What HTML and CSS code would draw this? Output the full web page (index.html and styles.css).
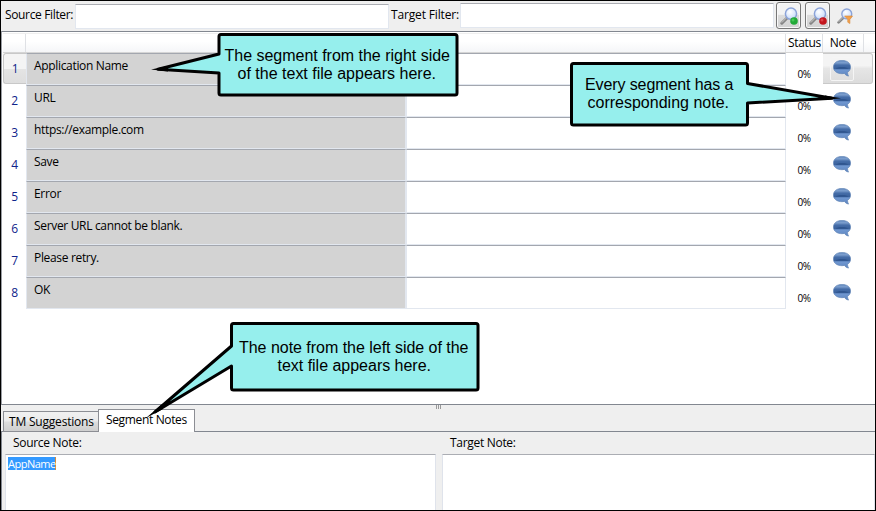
FILE: index.html
```html
<!DOCTYPE html>
<html lang="en">
<head>
<meta charset="utf-8">
<title>Translation Editor</title>
<link rel="stylesheet" href="styles.css">
</head>
<body>
<svg class="defs" aria-hidden="true">
  <defs>
    <linearGradient id="bubbleFill" x1="0" y1="0" x2="0" y2="1">
      <stop offset="0" stop-color="#5f86bd"/><stop offset=".15" stop-color="#7d9fce"/><stop offset=".3" stop-color="#456da8"/><stop offset=".53" stop-color="#3a619c"/><stop offset=".6" stop-color="#6f97d0"/><stop offset="1" stop-color="#5f86c0"/>
    </linearGradient>
    <radialGradient id="lens" cx=".4" cy=".35" r=".7">
      <stop offset="0" stop-color="#fff"/><stop offset="1" stop-color="#c3d8fa"/>
    </radialGradient>
    <symbol id="note" viewBox="0 0 18 17">
      <path d="M9 .4c5 0 8.600 2.700 8.600 6.600 0 2.500-1.300 4.300-3.100 5.300 0 1.300.4 2.500 1 3.800-2-.5-3.200-1.400-4-2.700-.8.200-1.600.300-2.500.300C4 13.700.4 11 .4 7S4 .4 9 .4z" fill="url(#bubbleFill)" stroke="#6387b8" stroke-width=".7"/>
      <path d="M3 8.800c0-2.500 12-2.500 12 0z" fill="#2f558f"/>
    </symbol>
    <symbol id="search" viewBox="0 0 18 18">
      <path d="M1.800 16.200 7.300 10.700" stroke="#858585" stroke-width="3" stroke-linecap="round"/>
      <path d="M1.800 15.600 7 10.300" stroke="#c8c8c8" stroke-width="1"/>
      <circle cx="11" cy="6.700" r="5.600" fill="url(#lens)" stroke="#8ba3d8" stroke-width="1.500"/>
    </symbol>
  </defs>
</svg>
<div class="window">
  <header class="toolbar">
    <label class="source-label">Source Filter:</label>
    <div class="input source-input"></div>
    <label class="target-label">Target Filter:</label>
    <div class="input target-input"></div>
    <button class="tool"><svg viewBox="0 0 18 18"><use href="#search"/><circle cx="14" cy="14" r="3.800" fill="#22aa38"/><circle cx="13" cy="13" r="1.500" fill="#45c957"/></svg></button>
    <button class="tool second"><svg viewBox="0 0 18 18"><use href="#search"/><circle cx="14" cy="14" r="3.800" fill="#c3151d"/><circle cx="13" cy="13" r="1.500" fill="#dd4248"/></svg></button>
    <svg class="filter" viewBox="0 0 18 18"><use href="#search"/><path d="M8.500 9h9l-3 4v4.500l-2.400-1.500v-3z" fill="#f3a04b" stroke="#d98a3c" stroke-width=".7"/></svg>
  </header>
  <main class="grid-panel">
    <div class="row head"><span></span><span></span><span></span><span>Status</span><span>Note</span><span></span></div>
    <div class="row current"><span class="num">1</span><span class="source">Application Name</span><span class="target"></span><span class="status">0%</span><span class="note"><svg><use href="#note"/></svg></span></div>
    <div class="row"><span class="num">2</span><span class="source">URL</span><span class="target"></span><span class="status">0%</span><span class="note"><svg><use href="#note"/></svg></span></div>
    <div class="row"><span class="num">3</span><span class="source">https://example.com</span><span class="target"></span><span class="status">0%</span><span class="note"><svg><use href="#note"/></svg></span></div>
    <div class="row"><span class="num">4</span><span class="source">Save</span><span class="target"></span><span class="status">0%</span><span class="note"><svg><use href="#note"/></svg></span></div>
    <div class="row"><span class="num">5</span><span class="source">Error</span><span class="target"></span><span class="status">0%</span><span class="note"><svg><use href="#note"/></svg></span></div>
    <div class="row"><span class="num">6</span><span class="source">Server URL cannot be blank.</span><span class="target"></span><span class="status">0%</span><span class="note"><svg><use href="#note"/></svg></span></div>
    <div class="row"><span class="num">7</span><span class="source">Please retry.</span><span class="target"></span><span class="status">0%</span><span class="note"><svg><use href="#note"/></svg></span></div>
    <div class="row"><span class="num">8</span><span class="source">OK</span><span class="target"></span><span class="status">0%</span><span class="note"><svg><use href="#note"/></svg></span></div>
  </main>
  <div class="tabs"><div class="tab">TM Suggestions</div><div class="tab active">Segment Notes</div><div class="grip"><i></i><i></i><i></i></div></div>
  <section class="notes">
    <div class="pane"><div class="pane-label">Source Note:</div><div class="editor"><span class="selection">AppName</span></div></div>
    <div class="pane"><div class="pane-label">Target Note:</div><div class="editor"></div></div>
  </section>
</div>
<svg class="callouts" viewBox="0 0 876 511">
  <g class="shape">
    <path d="M221 34.500H455Q457 34.500 457 36.500V93Q457 95 455 95H221Q219 95 219 93V73L158 69.200 219 54V36.500Q219 34.500 221 34.500Z"/>
    <path d="M573.500 63.500H745.500Q747.500 63.500 747.500 65.500V83.500L832 98.300 747.500 103V123Q747.500 125 745.500 125H573.500Q571.500 125 571.500 123V65.500Q571.500 63.500 573.500 63.500Z"/>
    <path d="M233.500 323.500H476Q478 323.500 478 325.500V388Q478 390 476 390H233.500Q231.500 390 231.500 388V366L155 412 231.500 346V325.500Q231.500 323.500 233.500 323.500Z"/>
  </g>
  <path d="M168 66 151 69.500 168 71.500ZM825 95.500 841 98.300 825 100ZM161 405 146 418 163 409Z"/>
  <g class="words">
    <text x="224.500" y="61" textLength="225.500">The segment from the right side</text>
    <text x="237.500" y="79" textLength="198.500">of the text file appears here.</text>
    <text x="585" y="90" textLength="148.500">Every segment has a</text>
    <text x="587.500" y="108" textLength="141.500">corresponding note.</text>
    <text x="239" y="353" textLength="229.500">The note from the left side of the</text>
    <text x="277.500" y="371" textLength="153.500">text file appears here.</text>
  </g>
</svg>
</body>
</html>
```
FILE: styles.css
```css
* { box-sizing: border-box; }
body { margin: 0; font: 12px/16px "Open Sans", "Noto Sans", sans-serif; letter-spacing: -.25px; color: #000; }
.defs { position: absolute; width: 0; height: 0; }
.window { width: 876px; height: 511px; border: 1px solid #000; background: #efefef; display: flex; flex-direction: column; overflow: hidden; }
.toolbar { height: 30px; flex: none; display: flex; align-items: flex-start; padding: 1px 0 0 4px; }
.toolbar label { padding-top: 5px; white-space: nowrap; flex: none; letter-spacing: -.3px; }
.source-label { width: 70px; }
.toolbar .source-label { letter-spacing: -.35px; }
.toolbar .target-label { width: 71px; padding-left: 2px; letter-spacing: -.15px; }
.input { height: 25px; background: #fff; border: 1px solid #e2e7ef; border-top-color: #abadb3; flex: none; margin-top: 1px; }
.source-input { width: 314px; margin-top: 2px; }
.target-input { width: 314px; }
.tool { width: 25px; height: 27px; padding: 3px; margin-left: 2px; border: 1px solid #777; border-radius: 3px; background: linear-gradient(#f3f3f3 45%, #dcdcdc 50%, #d2d2d2); box-shadow: inset 0 0 0 1px #f8f8f8; flex: none; }
.tool svg { width: 18px; height: 18px; display: block; }
.tool.second { margin-left: 4px; }
.filter { width: 16px; height: 16px; margin: 6px 0 0 7px; }
.grid-panel { height: 374px; flex: none; background: #fff; border-top: 1px solid #828790; border-bottom: 1px solid #828790; border-left: 1px solid #9a9da3; padding: 1px 0 0 1px; }
.row { height: 32px; display: grid; grid-template-columns: 23px 380px 380px 37px 50px; }
.row.head { height: 20px; grid-template-columns: 23px 380px 380px 37px 41px 8px; background: linear-gradient(#fff 40%, #f5f6f8); border-top: 1px solid #efefef; border-bottom: 1px solid #d5d5d5; }
.head span { border-right: 1px solid #dfe1e5; text-align: center; padding-top: 1px; letter-spacing: -.2px; }
.head span:nth-child(4) { padding-left: 1px; letter-spacing: -.3px; }
.head span:nth-child(2) { border: 0; }
.head span:last-child { border: 0; }
.num { color: #10248b; text-align: center; padding-top: 8px; }
.source, .target { border: 1px solid #e2e7ef; border-top-color: #a3a7af; }
.source { background: #d3d3d3; padding: 4px 7px; white-space: nowrap; letter-spacing: -.33px; }
.status { font-size: 10px; line-height: 14px; padding: 14px 0 0 11.5px; letter-spacing: -.4px; }
.note { padding: 7px 0 0 10px; }
.note svg { display: block; width: 18px; height: 17px; }
.current .num { background: linear-gradient(#f4f4f4 50%, #e4e4e4 52%, #dedede); border: 1px solid #c8c8c8; border-right: 0; border-radius: 3px 0 0 3px; padding-top: 7px; height: 31px; }
.current .note { background: linear-gradient(#f4f4f4 40%, #e6e6e6 50%, #dcdcdc); border: 1px solid #c9c9c9; border-left: 0; border-radius: 0 3px 3px 0; height: 31px; padding: 3px 0 0 7px; }
.current .note svg { width: 24px; height: 24px; padding: 2px 2px 3px; border: 1px solid #f5f5f5; border-radius: 2px; }
.tabs { height: 27px; flex: none; display: flex; align-items: flex-end; padding-left: 2px; position: relative; background: linear-gradient(#828790, #828790) bottom / 100% 1px no-repeat; }
.tab { height: 21px; width: 95px; border: 1px solid #8c8e94; border-right: 0; background: linear-gradient(#f1f1f1, #ebebeb 48%, #dddddd 52%, #cfcfcf); padding: 2px 0 0 5px; white-space: nowrap; letter-spacing: -.2px; }
.tab.active { height: 23px; width: 97px; border-right: 1px solid #8c8e94; border-bottom: 0; background: #fff; padding: 2px 0 0 7px; letter-spacing: -.35px; }
.grip { position: absolute; left: 435px; top: 0; display: flex; gap: 1px; }
.grip i { width: 1px; height: 4px; background: #999; }
.notes { flex: 1; border-left: 1px solid #828790; padding-left: 3px; display: grid; grid-template-columns: 431px 1fr; column-gap: 6px; }
.pane { display: flex; flex-direction: column; }
.pane-label { height: 22px; padding: 3px 0 0 8px; letter-spacing: -.3px; }
.editor { flex: 1; background: #fff; border: 1px solid #dfe3eb; border-top-color: #abadb3; border-bottom: 0; padding: 2px 2px; line-height: 13px; }
.selection { display: inline-block; height: 13px; width: 48px; font-size: 11px; letter-spacing: -.5px; background: #3399ff; color: #fff; border-right: 1px solid #d48a3c; }
.callouts { position: absolute; left: 0; top: 0; width: 876px; height: 511px; }
.shape { fill: #96efed; stroke: #000; stroke-width: 3px; stroke-linejoin: round; }
.words { font: 16px "Liberation Sans", Arial, sans-serif; fill: #000; letter-spacing: 0; }
```
